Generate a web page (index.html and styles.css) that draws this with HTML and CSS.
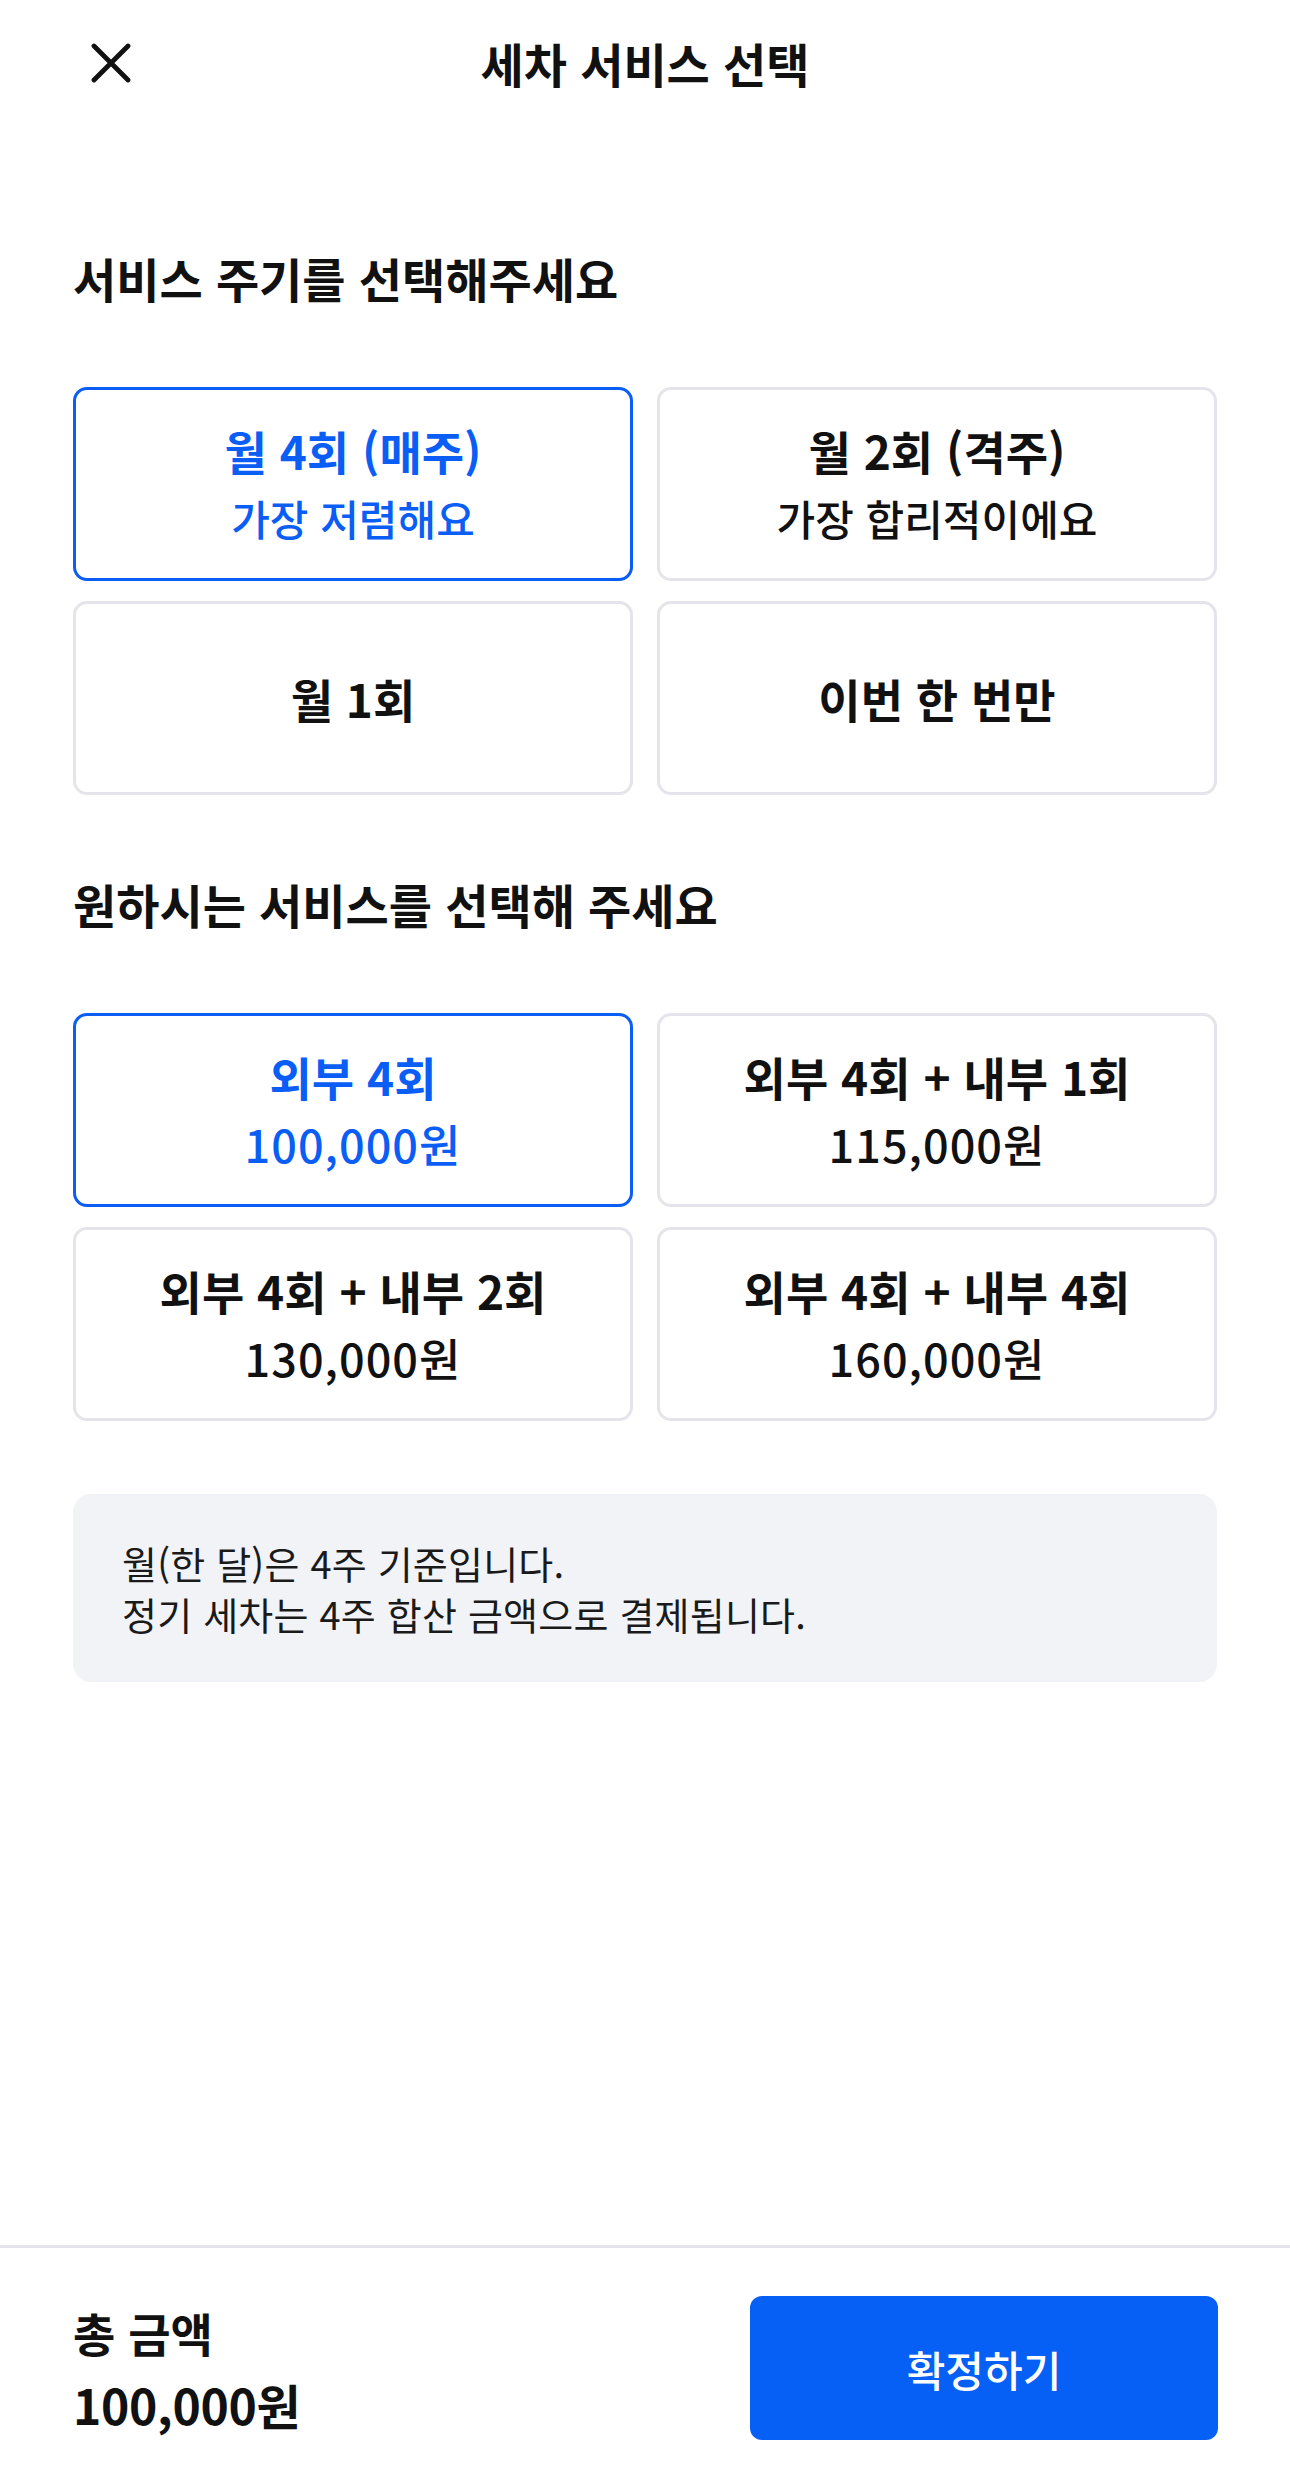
FILE: index.html
```html
<!DOCTYPE html>
<html lang="ko">
<head>
    <meta charset="UTF-8">
    <meta name="viewport" content="width=device-width, initial-scale=1.0">
    <title>세차 서비스 선택</title>
    <link rel="stylesheet" href="styles.css">
</head>
<body>
    <header class="topbar">
        <button class="close-btn" aria-label="닫기">
            <svg width="40" height="40" viewBox="0 0 40 40">
                <path d="M3 3 L37 37 M37 3 L3 37" stroke="#111" stroke-width="4.8" stroke-linecap="round" fill="none"/>
            </svg>
        </button>
        <h1 class="title">세차 서비스 선택</h1>
        <div></div>
    </header>

    <main class="content">
        <h2 class="section-title">서비스 주기를 선택해주세요</h2>
        <div class="options">
            <button class="option selected">
                <span class="main">월 4회 (매주)</span>
                <span class="sub">가장 저렴해요</span>
            </button>
            <button class="option">
                <span class="main">월 2회 (격주)</span>
                <span class="sub">가장 합리적이에요</span>
            </button>
            <button class="option">
                <span class="main">월 1회</span>
            </button>
            <button class="option">
                <span class="main">이번 한 번만</span>
            </button>
        </div>

        <h2 class="section-title">원하시는 서비스를 선택해 주세요</h2>
        <div class="options">
            <button class="option selected">
                <span class="main">외부 4회</span>
                <span class="sub price">100,000원</span>
            </button>
            <button class="option">
                <span class="main">외부 4회 + 내부 1회</span>
                <span class="sub price">115,000원</span>
            </button>
            <button class="option">
                <span class="main">외부 4회 + 내부 2회</span>
                <span class="sub price">130,000원</span>
            </button>
            <button class="option">
                <span class="main">외부 4회 + 내부 4회</span>
                <span class="sub price">160,000원</span>
            </button>
        </div>

        <div class="notice">
            <p>월(한 달)은 4주 기준입니다.</p>
            <p>정기 세차는 4주 합산 금액으로 결제됩니다.</p>
        </div>
    </main>

    <footer class="bottom-bar">
        <div class="total">
            <span class="total-label">총 금액</span>
            <span class="total-price">100,000원</span>
        </div>
        <button class="confirm-btn">확정하기</button>
    </footer>
</body>
</html>
```

FILE: styles.css
```css
* {
    box-sizing: border-box;
}
body {
    font-family: 'Noto Sans CJK KR', 'Noto Sans', sans-serif;
    color: #111;
    background-color: #fff;
    margin: 0;
    min-height: 100vh;
    display: flex;
    flex-direction: column;
}
button {
    font-family: inherit;
    cursor: pointer;
}
.topbar {
    height: 125px;
    padding: 0 73px;
    display: grid;
    grid-template-columns: 1fr auto 1fr;
    align-items: center;
}
.close-btn {
    width: 40px;
    height: 40px;
    margin-left: 18px;
    padding: 0;
    border: none;
    background: none;
    display: flex;
}
.title {
    margin: 0;
    font-size: 47px;
    font-weight: 700;
    line-height: 60px;
}
.content {
    padding: 0 73px;
}
.section-title {
    margin: 120px 0 76px;
    font-size: 47px;
    font-weight: 700;
    line-height: 66px;
}
.options + .section-title {
    margin-top: 76px;
}
.options {
    display: grid;
    grid-template-columns: 1fr 1fr;
    column-gap: 24px;
    row-gap: 20px;
}
.option {
    height: 194px;
    padding: 0;
    background: #fff;
    border: 3px solid #e4e4ea;
    border-radius: 14px;
    color: #111;
    display: flex;
    flex-direction: column;
    align-items: center;
    justify-content: center;
}
.option .main {
    font-size: 46px;
    font-weight: 700;
    line-height: 68px;
}
.option .sub {
    font-size: 42px;
    font-weight: 500;
    line-height: 68px;
}
.option .price {
    font-size: 45px;
    letter-spacing: 1px;
}
.option.selected {
    border-color: #0a5ef5;
    color: #0a5ef5;
}
.notice {
    margin-top: 73px;
    padding: 43px 49px;
    background-color: #f2f3f7;
    border-radius: 18px;
}
.notice p {
    margin: 0;
    font-size: 38px;
    letter-spacing: 0.2px;
    line-height: 51px;
    color: #1a1a1a;
}
.bottom-bar {
    margin-top: auto;
    border-top: 3px solid #e4e4ea;
    padding: 48px 72px 48px 73px;
    display: flex;
    justify-content: space-between;
    align-items: center;
}
.total {
    display: flex;
    flex-direction: column;
}
.total-label {
    font-size: 46px;
    font-weight: 700;
    line-height: 72px;
}
.total-price {
    font-size: 48px;
    font-weight: 700;
    letter-spacing: -0.3px;
    line-height: 72px;
}
.confirm-btn {
    width: 468px;
    height: 144px;
    border: none;
    border-radius: 12px;
    background-color: #0660f5;
    color: #fff;
    font-size: 42px;
    font-weight: 500;
}
```
